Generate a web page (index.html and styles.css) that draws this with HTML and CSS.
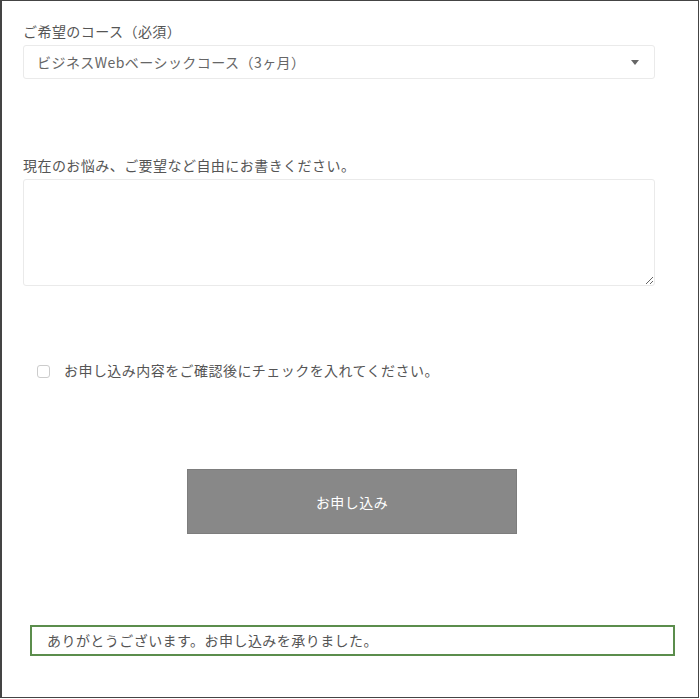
FILE: index.html
```html
<!DOCTYPE html>
<html lang="ja">
<head>
    <meta charset="utf-8">
    <link rel="stylesheet" href="styles.css">
</head>
<body>
    <div class="frame">
        <form class="entry-form">
            <label class="field-label" for="course">ご希望のコース（必須）</label>
            <div class="select-wrap">
                <select id="course" class="select">
                    <option>ビジネスWebベーシックコース（3ヶ月）</option>
                </select>
                <span class="select-arrow"></span>
            </div>

            <label class="field-label second" for="message">現在のお悩み、ご要望など自由にお書きください。</label>
            <textarea id="message" class="textarea"></textarea>

            <label class="confirm-row">
                <input type="checkbox" class="checkbox">
                <span>お申し込み内容をご確認後にチェックを入れてください。</span>
            </label>

            <button type="button" class="submit">お申し込み</button>
        </form>

        <!-- Sent message -->
        <p class="thanks">ありがとうございます。お申し込みを承りました。</p>
    </div>
</body>
</html>
```

FILE: styles.css
```css
* {
    margin: 0;
    padding: 0;
    box-sizing: border-box;
}
body {
    background: #fff;
    font-family: "Noto Sans CJK JP", "Noto Sans", sans-serif;
    color: #555;
    font-size: 14px;
    letter-spacing: 0.45px;
}
.frame {
    width: 699px;
    height: 698px;
    border: 1px solid #444;
    border-left-width: 2px;
    padding: 20px 0 0 21px;
}
.entry-form {
    display: flex;
    flex-direction: column;
    width: 632px;
}
.field-label {
    display: block;
    line-height: 20px;
    height: 20px;
}
.field-label.second {
    margin-top: 76px;
}
.select-wrap {
    position: relative;
    margin-top: 4px;
}
.select {
    appearance: none;
    -webkit-appearance: none;
    width: 632px;
    height: 34px;
    border: 1px solid #eaeaea;
    border-radius: 3px;
    background: #fff;
    font-family: inherit;
    font-size: 14px;
    letter-spacing: 0.45px;
    color: #666;
    padding: 0 13px;
    outline: none;
}
.select-arrow {
    position: absolute;
    right: 16px;
    top: 15px;
    width: 0;
    height: 0;
    border-left: 4px solid transparent;
    border-right: 4px solid transparent;
    border-top: 5px solid #666;
}
.textarea {
    margin-top: 4px;
    width: 632px;
    height: 107px;
    border: 1px solid #eaeaea;
    border-radius: 3px;
    background: #fff;
    outline: none;
    font-family: inherit;
}
.confirm-row {
    display: flex;
    align-items: center;
    margin-top: 74px;
    height: 20px;
    padding-left: 14px;
}
.checkbox {
    appearance: none;
    -webkit-appearance: none;
    width: 13px;
    height: 13px;
    border: 1px solid #ccc;
    border-radius: 3px;
    background: #fff;
    margin-right: 14px;
    margin-top: 3px;
}
.submit {
    align-self: flex-start;
    margin-top: 89px;
    margin-left: 164px;
    width: 330px;
    height: 65px;
    background: #888;
    color: #fff;
    border: 1px solid #7d7d7d;
    font-family: inherit;
    font-size: 14px;
    letter-spacing: 0.45px;
}
.thanks {
    margin-top: 91px;
    margin-left: 7px;
    width: 645px;
    height: 31px;
    border: 2px solid #5b8d4c;
    padding-left: 15px;
    line-height: 27px;
}
```
